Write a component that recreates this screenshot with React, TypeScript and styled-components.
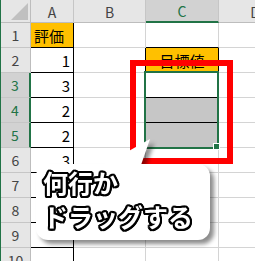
import { FC } from "react";
import styled, { createGlobalStyle } from "styled-components";

const GREEN = "#217346";
const GRID = "#d4d4d4";
const ORANGE = "#ffc000";

type CellData = {
	text?: string;
	bg?: string;
	align?: "left" | "right" | "center";
	right?: string;
	bottom?: string;
};

const columns = [
	{ name: "A", active: false },
	{ name: "B", active: false },
	{ name: "C", active: true },
	{ name: "D", active: false },
];

const valuesA = ["評価", "1", "3", "2", "2", "3", "", "", "", ""];

// one row of cells for A..D
const buildRow = (row: number): CellData[] => {
	const a: CellData = {
		text: valuesA[row - 1],
		bg: row === 1 ? ORANGE : undefined,
		align: row === 1 ? "left" : "right",
		right: "#000",
		bottom: "#000",
	};
	const tableC = row >= 2 && row <= 5;
	const b: CellData = { right: tableC ? "#000" : undefined };
	const c: CellData = {
		text: row === 2 ? "目標値" : "",
		bg: row === 2 ? ORANGE : row === 4 || row === 5 ? "#c6c6c6" : undefined,
		align: "center",
		right: tableC ? "#000" : undefined,
		bottom: tableC || row === 1 ? "#000" : undefined,
	};
	return [a, b, c, {}];
};

const rows = Array.from({ length: 10 }, (_, i) => i + 1);

const App: FC = () => {
	return (
		<>
			<GlobalStyle />
			<Sheet>
				<Grid>
					<Corner />
					{columns.map((c) => (
						<ColHead key={c.name} $active={c.active}>
							{c.name}
						</ColHead>
					))}
					{rows.map((r) => (
						<Row key={r} row={r} />
					))}
				</Grid>

				<Selection>
					<Handle />
				</Selection>
				<RedFrame />

				<Bubble>
					<Tail width='56' height='28' viewBox='0 0 56 28'>
						<polygon points='4,28 50,2 41,28' fill='#fff' />
					</Tail>
					<BubbleBody>
						何行か
						<br />
						ドラッグする
					</BubbleBody>
				</Bubble>
			</Sheet>
		</>
	);
};

const Row: FC<{ row: number }> = ({ row }) => {
	const active = row >= 3 && row <= 5;
	return (
		<>
			<RowHead $active={active}>{row}</RowHead>
			{buildRow(row).map((c, i) => (
				<Cell
					key={i}
					$bg={c.bg}
					$align={c.align}
					$right={c.right}
					$bottom={c.bottom}>
					{c.text}
				</Cell>
			))}
		</>
	);
};

const GlobalStyle = createGlobalStyle`
	html, body {
		margin: 0;
		padding: 0;
		background: #fff;
	}
	body {
		font-family: "Noto Sans CJK JP", "Noto Sans", sans-serif;
	}
`;

const Sheet = styled.div`
	position: relative;
	width: 255px;
	height: 261px;
	overflow: hidden;
	background: #fff;
`;

const Grid = styled.div`
	display: grid;
	grid-template-columns: 30px 43px 72px 73px 73px;
	grid-template-rows: 23px repeat(10, 25px);
	border-left: 1px solid ${GREEN};
	width: max-content;
`;

const Corner = styled.div`
	position: relative;
	background: #e6e6e6;
	border-right: 1px solid #bdbdbd;
	border-bottom: 1px solid #bdbdbd;
	box-sizing: border-box;

	&::after {
		content: "";
		position: absolute;
		right: 2px;
		bottom: 2px;
		width: 17px;
		height: 17px;
		background: #c0c0c0;
		clip-path: polygon(100% 0, 100% 100%, 0 100%);
	}
`;

const ColHead = styled.div<{ $active?: boolean }>`
	display: flex;
	align-items: center;
	justify-content: center;
	box-sizing: border-box;
	background: ${(p) => (p.$active ? "#d2d2d2" : "#e6e6e6")};
	border-right: 1px solid #c6c6c6;
	border-bottom: ${(p) =>
		p.$active ? `2px solid ${GREEN}` : "1px solid #bdbdbd"};
	color: ${(p) => (p.$active ? GREEN : "#444")};
	font-size: 14px;
	padding-top: 1px;
`;

const RowHead = styled.div<{ $active?: boolean }>`
	display: flex;
	align-items: center;
	justify-content: center;
	box-sizing: border-box;
	background: ${(p) => (p.$active ? "#d2d2d2" : "#e6e6e6")};
	border-right: ${(p) =>
		p.$active ? `2px solid ${GREEN}` : "1px solid #bdbdbd"};
	border-bottom: 1px solid #c6c6c6;
	color: ${(p) => (p.$active ? GREEN : "#444")};
	font-size: 14px;
`;

const Cell = styled.div<{
	$bg?: string;
	$align?: "left" | "right" | "center";
	$right?: string;
	$bottom?: string;
}>`
	display: flex;
	align-items: center;
	justify-content: ${(p) =>
		p.$align === "left"
			? "flex-start"
			: p.$align === "center"
			? "center"
			: "flex-end"};
	box-sizing: border-box;
	padding: 0 3px;
	background: ${(p) => p.$bg || "#fff"};
	border-right: 1px solid ${(p) => p.$right || GRID};
	border-bottom: 1px solid ${(p) => p.$bottom || GRID};
	color: #000;
	font-size: 15px;
	white-space: nowrap;
`;

const Selection = styled.div`
	position: absolute;
	left: 144px;
	top: 71px;
	width: 75px;
	height: 78px;
	border: 2px solid ${GREEN};
	box-sizing: border-box;
`;

const Handle = styled.div`
	position: absolute;
	right: -3px;
	bottom: -3px;
	width: 7px;
	height: 7px;
	background: ${GREEN};
	border: 1px solid #fff;
	box-sizing: border-box;
`;

const RedFrame = styled.div`
	position: absolute;
	left: 130px;
	top: 60px;
	width: 103px;
	height: 104px;
	border: 6px solid #ff0000;
	box-sizing: border-box;
`;

const Bubble = styled.div`
	position: absolute;
	left: 36px;
	top: 137px;
	display: flex;
	flex-direction: column;
	filter: drop-shadow(4px 4px 2px rgba(0, 0, 0, 0.45));
`;

const Tail = styled.svg`
	display: block;
	margin-left: 64px;
	margin-bottom: -1px;
`;

const BubbleBody = styled.div`
	width: 174px;
	height: 76px;
	box-sizing: border-box;
	padding: 1px 0 0 7px;
	background: #fff;
	border-radius: 12px;
	font-size: 25px;
	font-weight: 700;
	line-height: 34px;
	color: #fff;
	white-space: nowrap;
	text-shadow: 2px 0 0 #000, -2px 0 0 #000, 0 2px 0 #000, 0 -2px 0 #000,
		1.5px 1.5px 0 #000, -1.5px 1.5px 0 #000, 1.5px -1.5px 0 #000,
		-1.5px -1.5px 0 #000, 2px 1px 0 #000, -2px 1px 0 #000, 2px -1px 0 #000,
		-2px -1px 0 #000, 1px 2px 0 #000, -1px 2px 0 #000, 1px -2px 0 #000,
		-1px -2px 0 #000;
`;

export default App;
